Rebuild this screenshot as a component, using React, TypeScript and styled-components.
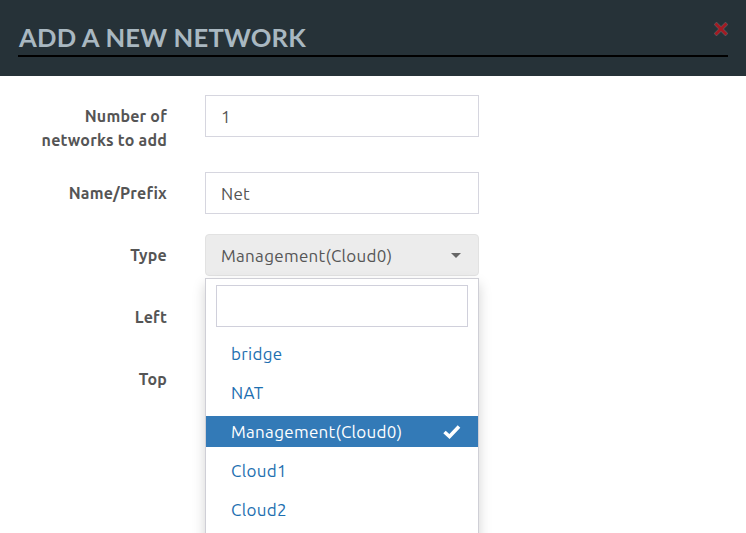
import React from "react";
import styled, { createGlobalStyle } from "styled-components";

const Global = createGlobalStyle`
  html, body { margin: 0; padding: 0; background: #fff; }
  body { font-family: "Ubuntu", "Open Sans", "Noto Sans", sans-serif; overflow: hidden; }
  * { box-sizing: border-box; }
`;

const Modal = styled.div`
  width: 746px;
  height: 533px;
  background: #fff;
  overflow: hidden;
`;

const Header = styled.div`
  background: #263238;
  height: 76px;
  padding: 19px 18px 0 18px;
  position: relative;
`;

const Title = styled.h4`
  margin: 0;
  font-family: "Lato", "Open Sans", sans-serif;
  font-weight: 700;
  font-size: 25.6px;
  line-height: 36px;
  color: #a9b8c1;
  letter-spacing: 0.2px;
  padding-left: 1px;
  border-bottom: 2px solid #000;
  width: 710px;
`;

const Close = styled.button`
  position: absolute;
  top: 22px;
  right: 18px;
  width: 14px;
  height: 14px;
  border: 0;
  padding: 0;
  background: transparent;
  cursor: pointer;
  display: flex;
`;

const Body = styled.div`
  padding: 19px 0 0 0;
  display: grid;
  grid-template-columns: 167px 274px;
  column-gap: 38px;
  row-gap: 20px;
  align-items: start;
`;

const Label = styled.label`
  font-size: 16px;
  line-height: 24px;
  font-weight: 600;
  color: #555;
  text-align: right;
  padding-top: 9px;
  letter-spacing: 0.2px;
`;

const Input = styled.div`
  height: 42px;
  border: 1px solid #d6d6df;
  background: #fff;
  padding: 0 15px;
  display: flex;
  align-items: center;
  font-size: 17px;
  letter-spacing: 0.3px;
  color: #555;
`;

const SelectWrap = styled.div`
  position: relative;
`;

const SelectButton = styled.div`
  height: 42px;
  border-radius: 4px;
  background: #ececec;
  border: 1px solid #e2e2e2;
  padding: 0 15px;
  display: flex;
  align-items: center;
  justify-content: space-between;
  font-size: 17px;
  letter-spacing: 0.3px;
  color: #555;
`;

const Caret = styled.span`
  width: 0;
  height: 0;
  border-left: 5px solid transparent;
  border-right: 5px solid transparent;
  border-top: 5px solid #666;
  margin-right: 2px;
`;

const Menu = styled.div`
  position: absolute;
  top: 44px;
  left: 0;
  width: 274px;
  height: 300px;
  background: #fff;
  border: 1px solid #cfcfd6;
  box-shadow: 0 6px 12px rgba(0, 0, 0, 0.175);
  z-index: 10;
  padding-top: 6px;
`;

const Search = styled.div`
  margin: 0 10px;
  height: 42px;
  border: 1px solid #d0d0db;
`;

const List = styled.ul`
  list-style: none;
  margin: 0;
  padding: 11px 0 0 0;
  display: flex;
  flex-direction: column;
  gap: 8px;
`;

const Option = styled.li<{ $active?: boolean }>`
  height: 31px;
  padding: 0 17px 0 25px;
  display: flex;
  align-items: center;
  justify-content: space-between;
  font-size: 17px;
  letter-spacing: 0.3px;
  color: ${(p) => (p.$active ? "#fff" : "#1d6fb0")};
  background: ${(p) => (p.$active ? "#337ab7" : "transparent")};
`;

const HiddenField = styled.div`
  height: 42px;
  border: 1px solid #d6d6df;
  background: #fff;
`;

const options = ["bridge", "NAT", "Management(Cloud0)", "Cloud1", "Cloud2"];

export default function App() {
  return (
    <>
      <Global />
      <Modal>
        <Header>
          <Title>ADD A NEW NETWORK</Title>
          <Close aria-label="close">
            <svg width="14" height="14" viewBox="0 0 14 14">
              <path
                d="M2.5 2.5 L11.5 11.5 M11.5 2.5 L2.5 11.5"
                stroke="#6b6f73"
                strokeWidth="4"
                strokeLinecap="square"
                opacity="0.7"
              />
              <path
                d="M2.5 2.5 L11.5 11.5 M11.5 2.5 L2.5 11.5"
                stroke="#a31a22"
                strokeWidth="2.8"
                strokeLinecap="square"
              />
            </svg>
          </Close>
        </Header>
        <Body>
          <Label>
            Number of
            <br />
            networks to add
          </Label>
          <Input>1</Input>
          <Label>Name/Prefix</Label>
          <Input>Net</Input>
          <Label>Type</Label>
          <SelectWrap>
            <SelectButton>
              <span>Management(Cloud0)</span>
              <Caret />
            </SelectButton>
            <Menu>
              <Search />
              <List>
                {options.map((o) => (
                  <Option key={o} $active={o === "Management(Cloud0)"}>
                    <span>{o}</span>
                    {o === "Management(Cloud0)" && (
                      <svg width="18" height="15" viewBox="0 0 18 15">
                        <path
                          d="M1.5 8 L6.5 12.5 L16 2.5"
                          stroke="#fff"
                          strokeWidth="3.6"
                          fill="none"
                          strokeLinejoin="miter"
                        />
                      </svg>
                    )}
                  </Option>
                ))}
              </List>
            </Menu>
          </SelectWrap>
          <Label>Left</Label>
          <HiddenField />
          <Label>Top</Label>
          <HiddenField />
        </Body>
      </Modal>
    </>
  );
}
